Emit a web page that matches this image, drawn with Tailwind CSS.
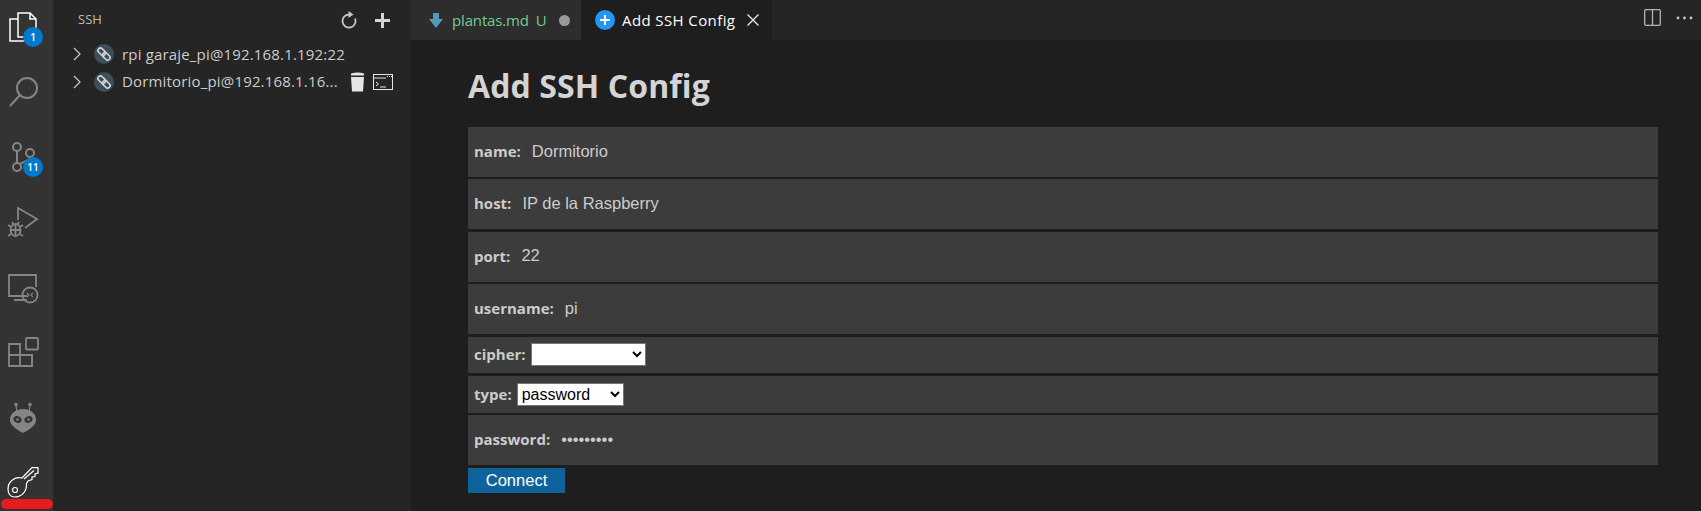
<!DOCTYPE html>
<html><head><meta charset="utf-8"><title>Add SSH Config</title>
<script src="https://cdn.jsdelivr.net/npm/@tailwindcss/browser@4"></script></head>
<body class="m-0 overflow-hidden bg-[#1e1e1e] font-['Open_Sans',sans-serif]">
<div class="flex w-[1701px] h-[511px] overflow-hidden">
  <!-- activity bar -->
  <nav class="relative w-[53px] h-full bg-[#333333] shrink-0 flex flex-col">
    <div class="relative h-[65px] w-full">
      <svg class="absolute left-[9px] top-[12px]" width="28" height="30" viewBox="0 0 28 30" fill="none" stroke="#fff" stroke-width="1.5"><path d="M9 1h12l6 6v18H9z"/><path d="M21 1v6h6" /><path d="M9 7H1v22h17v-4"/></svg>
      <span class="absolute left-[23px] top-[27px] w-5 h-5 rounded-full bg-[#007acc] text-white text-[10px] font-semibold leading-5 text-center">1</span>
    </div>
    <div class="relative h-[65px] w-full">
      <svg class="absolute left-[9px] top-[11px]" width="30" height="32" viewBox="0 0 30 32" fill="none" stroke="#858585" stroke-width="2"><circle cx="18" cy="12" r="10"/><path d="M11 19 1 30"/></svg>
    </div>
    <div class="relative h-[65px] w-full">
      <svg class="absolute left-[11px] top-[12px]" width="26" height="32" viewBox="0 0 26 32" fill="none" stroke="#858585" stroke-width="2"><circle cx="6" cy="5" r="4"/><circle cx="6" cy="25" r="4"/><circle cx="19" cy="11" r="4"/><path d="M6 9v12M9 22c4-3 9-2 10-7"/></svg>
      <span class="absolute left-[23px] top-[27px] w-5 h-5 rounded-full bg-[#007acc] text-white text-[10px] font-semibold leading-5 text-center">11</span>
    </div>
    <div class="relative h-[65px] w-full">
      <svg class="absolute left-[7px] top-[12px]" width="32" height="32" viewBox="0 0 32 32" fill="none" stroke="#858585" stroke-width="1.8"><path d="M11 13V1l19 11-12 9"/><ellipse cx="8.500" cy="23" rx="5" ry="6"/><path d="M3.500 23h10M8.500 17v12M1 18l3 2M1 29l3-2M16 18l-3 2M16 29l-3-2M5 15l2 3M12 15l-2 3"/></svg>
    </div>
    <div class="relative h-[65px] w-full">
      <svg class="absolute left-[8px] top-[14px]" width="32" height="30" viewBox="0 0 32 30" fill="none" stroke="#858585" stroke-width="1.8"><path d="M19 22H1V1h27v12M6 26h13"/><circle cx="22" cy="21" r="7.500"/><path d="M19 19l2 2-2 2M25 19l-2 2 2 2" stroke-width="1.200"/></svg>
    </div>
    <div class="relative h-[65px] w-full">
      <svg class="absolute left-[8px] top-[12px]" width="32" height="32" viewBox="0 0 32 32" fill="none" stroke="#858585" stroke-width="1.800"><rect x="18" y="1" width="12" height="11.500" rx="1"/><path d="M1 7h11v22H1zM1 18h23v11H12"/><path d="M24 18v11"/></svg>
    </div>
    <div class="relative h-[66px] w-full">
      <svg class="absolute left-[10px] top-[12px]" width="27" height="32" viewBox="0 0 27 32"><path d="M6 3l1 8M20 3l-1 8" stroke="#858585" stroke-width="1.200"/><circle cx="6" cy="2.500" r="1.800" fill="#858585"/><circle cx="20" cy="2.500" r="1.800" fill="#858585"/><path d="M13 7c7 0 13 4 13 11 0 6-9 11-13 13C9 29 0 24 0 18 0 11 6 7 13 7z" fill="#858585"/><ellipse cx="7.500" cy="17.500" rx="4.200" ry="3.200" transform="rotate(25 7.500 17.500)" fill="#333"/><ellipse cx="18.500" cy="17.500" rx="4.200" ry="3.200" transform="rotate(-25 18.500 17.500)" fill="#333"/><circle cx="7.500" cy="17.500" r="1.200" fill="#858585"/><circle cx="18.500" cy="17.500" r="1.200" fill="#858585"/></svg>
    </div>
    <div class="absolute left-0 top-[466px] w-[53px] h-[45px]">
      <svg class="absolute left-[7px] top-[1px]" width="32" height="32" viewBox="0 0 32 32" fill="none" stroke="#fff" stroke-width="1.200"><path d="M15 11 25 .6h6V6l-3 1v2.500l-3 .5v2.500L21 14l-1.500 2.500C20 24 15 30 7.500 30 3 30 1 26 1 22 1 14 8 9.500 15 11z"/><path d="M17 12 27 3.500" /><circle cx="8" cy="23" r="2.500"/></svg>
      <div class="absolute left-[1px] top-[33px] w-[52px] h-[10px] rounded-[5px] bg-[#e81c1c]"></div>
    </div>
  </nav>
  <!-- sidebar -->
  <aside class="w-[358px] h-full bg-[#252526] shrink-0 text-[#cccccc]">
    <div class="h-[40px] flex items-center pl-[25px] pr-[21px] justify-between">
      <span class="text-[13px] text-[#bbbbbb]">SSH</span>
      <div class="flex items-center gap-[18px]">
        <svg width="16" height="18" viewBox="0 0 16 18" fill="none" stroke="#c5c5c5" stroke-width="1.800"><path d="M8 3.500A6.500 6.500 0 1 0 14 7.500"/><path d="M7.500 0l5 3.500-5 3.500z" fill="#c5c5c5" stroke="none"/></svg>
        <svg width="15" height="15" viewBox="0 0 15 15" fill="#d4d4d4"><path d="M6 0h3v6h6v3H9v6H6V9H0V6h6z"/></svg>
      </div>
    </div>
    <div class="h-[28px] flex items-center whitespace-nowrap">
      <svg class="ml-[20px] w-[9px] h-[14px]" viewBox="0 0 9 14" fill="none" stroke="#c5c5c5" stroke-width="1.300"><path d="M1 1l6 6-6 6"/></svg>
      <svg class="ml-[12px] w-[20px] h-[20px]" viewBox="0 0 20 20"><circle cx="10" cy="10" r="10" fill="#3b4e59"/><g transform="rotate(45 10 10)" fill="none" stroke="#d4d4d4" stroke-width="1.600"><rect x="2.500" y="7.500" width="8.500" height="5" rx="2.500"/><rect x="9" y="7.500" width="8.500" height="5" rx="2.500"/></g></svg>
      <span class="ml-[8px] text-[15px] tracking-[0.17px]">rpi garaje_pi@192.168.1.192:22</span>
    </div>
    <div class="h-[27px] flex items-center whitespace-nowrap">
      <svg class="ml-[20px] w-[9px] h-[14px]" viewBox="0 0 9 14" fill="none" stroke="#c5c5c5" stroke-width="1.300"><path d="M1 1l6 6-6 6"/></svg>
      <svg class="ml-[12px] w-[20px] h-[20px]" viewBox="0 0 20 20"><circle cx="10" cy="10" r="10" fill="#3b4e59"/><g transform="rotate(45 10 10)" fill="none" stroke="#d4d4d4" stroke-width="1.600"><rect x="2.500" y="7.500" width="8.500" height="5" rx="2.500"/><rect x="9" y="7.500" width="8.500" height="5" rx="2.500"/></g></svg>
      <span class="ml-[8px] text-[15px] tracking-[0.17px]">Dormitorio_pi@192.168.1.16...</span>
      <svg class="ml-auto w-[15px] h-[20px]" viewBox="0 0 15 20" fill="#e6e6e6"><path d="M1 1.500Q7.500-.5 14 1.500V3.500H1zM1 5h13l-1 14.500H2z"/></svg>
      <svg class="ml-[8px] mr-[18px] w-[20px] h-[16px]" viewBox="0 0 20 16" fill="none" stroke="#e6e6e6"><rect x=".5" y=".5" width="19" height="15"/><path d="M1 4h12"/><path d="M14 2.500h1M16 2.500h1M18 2.500h1"/><path d="M3 8l2.500 2L3 12M7 13h6"/></svg>
    </div>
  </aside>
  <!-- main -->
  <main class="flex-1 min-w-0 h-full flex flex-col">
    <div class="h-[40px] bg-[#252526] flex items-stretch">
      <div class="w-[170px] bg-[#2d2d2d] flex items-center whitespace-nowrap">
        <svg class="ml-[18px] w-[14px] h-[15px]" viewBox="0 0 14 15" fill="#519aba"><path d="M4 0h6v6h4l-7 9-7-9h4z"/></svg>
        <span class="ml-[9px] text-[15px] text-[#73c991] tracking-[-0.15px]">plantas.md</span>
        <span class="ml-[7px] text-[15px] text-[#73c991]">U</span>
        <span class="ml-[12px] w-[11px] h-[11px] rounded-full bg-[#9a9a9a]"></span>
      </div>
      <div class="w-[191px] bg-[#1e1e1e] flex items-center whitespace-nowrap">
        <svg class="ml-[14px] w-[20px] h-[20px]" viewBox="0 0 20 20"><circle cx="10" cy="10" r="10" fill="#2196f3"/><path d="M10 5v10M5 10h10" stroke="#fff" stroke-width="2"/></svg>
        <span class="ml-[7px] text-[15px] text-white tracking-[0.4px]">Add SSH Config</span>
        <svg class="ml-[12px] w-[12px] h-[12px]" viewBox="0 0 12 12" stroke="#e6e6e6" stroke-width="1.400"><path d="M.5.500l11 11M11.500.500l-11 11"/></svg>
      </div>
      <div class="flex-1 flex items-center justify-end pr-[8px] pb-[5px]">
        <svg class="w-[17px] h-[17px] mr-[15px]" viewBox="0 0 17 17" fill="none" stroke="#b4b4b4" stroke-width="1.300"><rect x=".7" y=".7" width="15.600" height="15.600" rx="1"/><path d="M8.500 1v15"/></svg>
        <svg class="w-[17px] h-[4px]" viewBox="0 0 17 4" fill="#c5c5c5"><circle cx="2" cy="2" r="1.400"/><circle cx="8.500" cy="2" r="1.400"/><circle cx="15" cy="2" r="1.400"/></svg>
      </div>
    </div>
    <div class="pl-[57px] w-[1247px]">
      <h1 class="h-[87px] pt-[28px] text-[32px] leading-[36px] font-bold text-[#d4d4d4] tracking-[0.1px]">Add SSH Config</h1>
      <div class="h-[50px] pb-[2px] bg-[#3c3c3c] flex items-center pl-[6px] text-[15px] font-bold text-[#cccccc]">name:<span class="ml-[11px] font-['Liberation_Sans',sans-serif] font-normal text-[16.500px] text-[#cccccc]">Dormitorio</span></div>
      <div class="h-[50px] pb-[2px] mt-[2.400px] bg-[#3c3c3c] flex items-center pl-[6px] text-[15px] font-bold text-[#cccccc]">host:<span class="ml-[11px] font-['Liberation_Sans',sans-serif] font-normal text-[16.500px] text-[#cccccc]">IP de la Raspberry</span></div>
      <div class="h-[50px] pb-[2px] mt-[2.400px] bg-[#3c3c3c] flex items-center pl-[6px] text-[15px] font-bold text-[#cccccc]">port:<span class="ml-[11px] font-['Liberation_Sans',sans-serif] font-normal text-[16.500px] text-[#cccccc]">22</span></div>
      <div class="h-[50px] pb-[2px] mt-[2.400px] bg-[#3c3c3c] flex items-center pl-[6px] text-[15px] font-bold text-[#cccccc]">username:<span class="ml-[11px] font-['Liberation_Sans',sans-serif] font-normal text-[16.500px] text-[#cccccc]">pi</span></div>
      <div class="h-[36px] mt-[2.400px] bg-[#3c3c3c] flex items-center pl-[6px] text-[15px] font-bold text-[#cccccc]">cipher:<select class="ml-[5px] w-[115px] h-[23px] bg-white text-black border border-[#767676] font-['Liberation_Sans',sans-serif] font-normal text-[16px] appearance-auto"></select></div>
      <div class="h-[37px] mt-[3px] bg-[#3c3c3c] flex items-center pl-[6px] text-[15px] font-bold text-[#cccccc]">type:<select class="ml-[5px] w-[107px] h-[23px] bg-white text-black border border-[#767676] font-['Liberation_Sans',sans-serif] font-normal text-[16px] appearance-auto"><option>password</option></select></div>
      <div class="h-[50px] pb-[2px] mt-[2.400px] bg-[#3c3c3c] flex items-center pl-[6px] text-[15px] font-bold text-[#cccccc]">password:<span class="ml-[11px] font-['Liberation_Sans',sans-serif] font-normal text-[16.500px] text-[#cccccc]">•••••••••</span></div>
      <div class="mt-[3px] w-[97px] h-[25px] bg-[#0e639c] text-white text-center font-['Liberation_Sans',sans-serif] text-[16.500px] leading-[25px]">Connect</div>
    </div>
  </main>
</div>
</body></html>
